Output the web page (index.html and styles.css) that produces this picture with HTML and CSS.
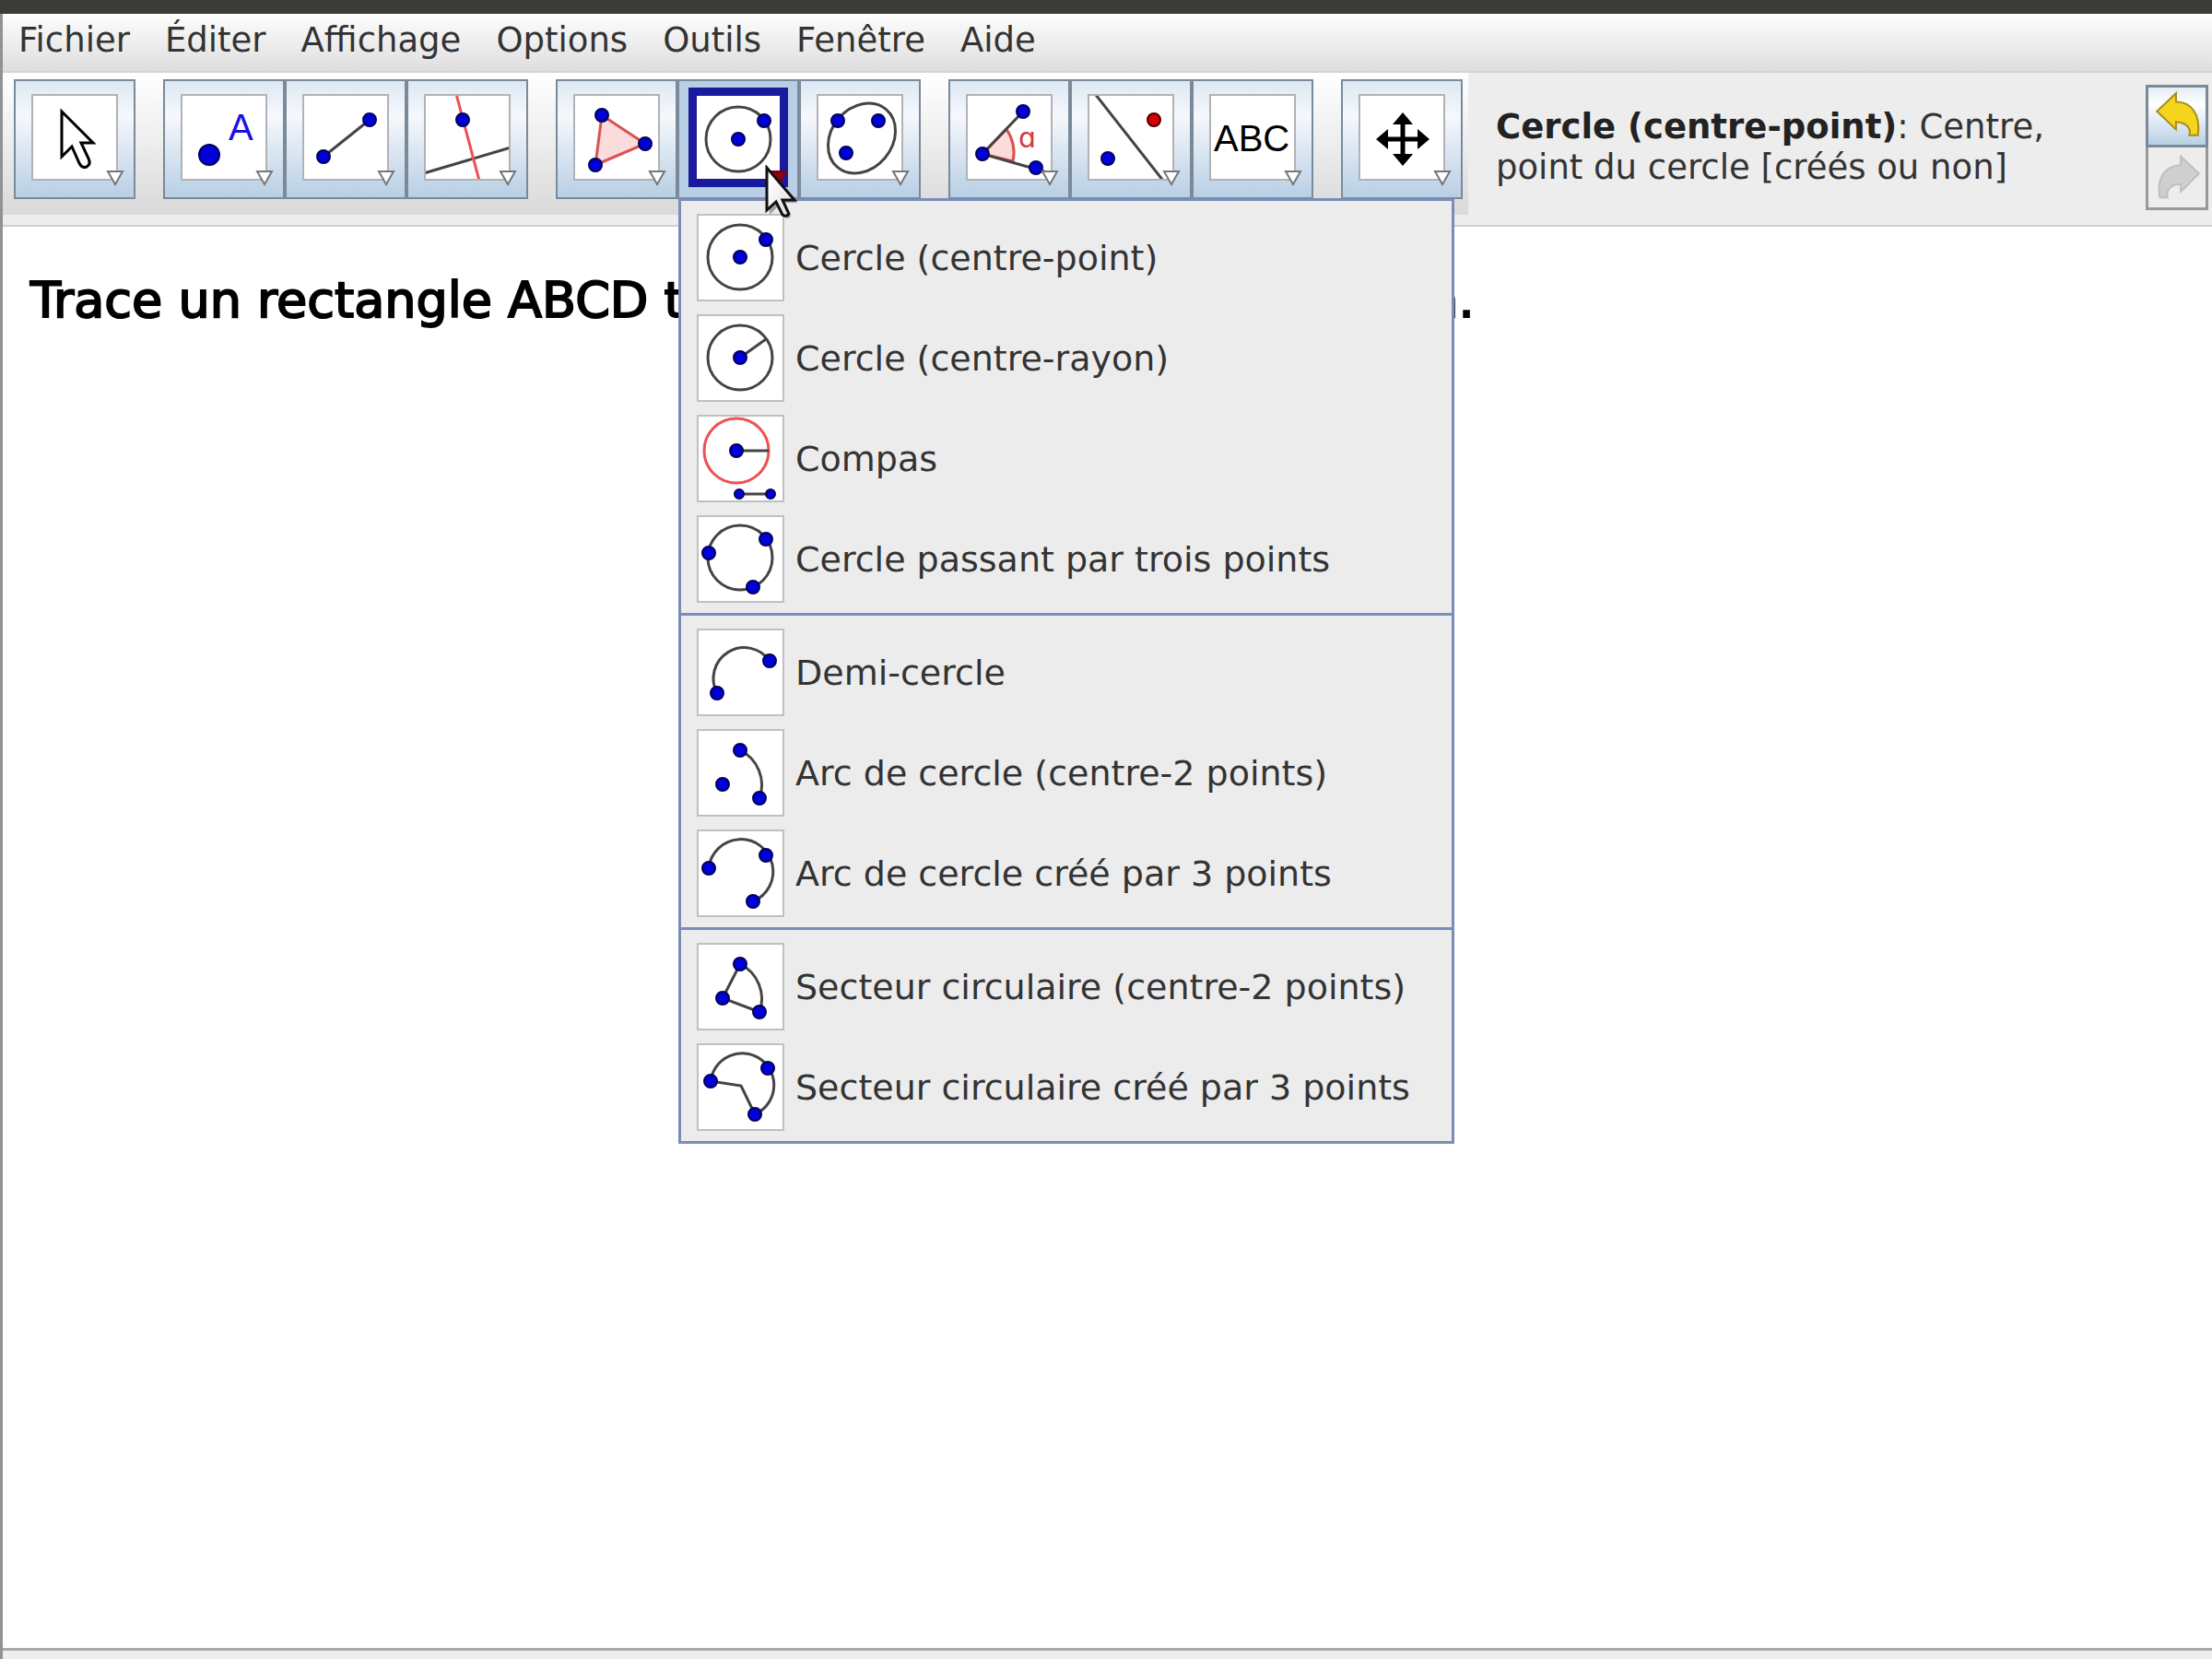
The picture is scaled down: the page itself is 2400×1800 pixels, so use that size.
FILE: index.html
```html
<!DOCTYPE html>
<html lang="fr">
<head>
<meta charset="UTF-8">
<meta name="viewport" content="width=device-width, initial-scale=1.0">
<title>GeoGebra</title>
<link rel="stylesheet" href="styles.css">
</head>
<body>

<div class="titlebar"></div>

<div class="window">
    <nav class="menubar">
        <a href="#">Fichier</a>
        <a href="#">Éditer</a>
        <a href="#">Affichage</a>
        <a href="#">Options</a>
        <a href="#">Outils</a>
        <a href="#">Fenêtre</a>
        <a href="#">Aide</a>
    </nav>

    <header class="toolbar">
        <div class="tools">
            <div class="group">
                <button class="tool" aria-label="Déplacer">
                    <svg class="icon" viewBox="2 2 90 90"><path d="M33 19V68L44 57L52 75Q55 81 60 79Q65 76 62 70L54 53H67Z" fill="#fff" stroke="#000" stroke-width="3"/></svg>
                    <svg class="arrow" viewBox="0 0 20 18"><path d="M2 2H18L10 16Z"/></svg>
                </button>
            </div>

            <div class="group">
                <button class="tool" aria-label="Point">
                    <svg class="icon" viewBox="2 2 90 90"><circle class="dot" cx="31" cy="66" r="11"/><text x="52" y="50" class="letter">A</text></svg>
                    <svg class="arrow" viewBox="0 0 20 18"><path d="M2 2H18L10 16Z"/></svg>
                </button>
                <button class="tool" aria-label="Segment">
                    <svg class="icon" viewBox="2 2 90 90"><path class="line" d="M23 68L73 28"/><circle class="dot" cx="23" cy="68" r="7"/><circle class="dot" cx="73" cy="28" r="7"/></svg>
                    <svg class="arrow" viewBox="0 0 20 18"><path d="M2 2H18L10 16Z"/></svg>
                </button>
                <button class="tool" aria-label="Perpendiculaire">
                    <svg class="icon" viewBox="2 2 90 90"><path class="line" d="M0 86L94 58"/><path class="line red" d="M35 0L60 94"/><circle class="dot" cx="42" cy="28" r="7"/></svg>
                    <svg class="arrow" viewBox="0 0 20 18"><path d="M2 2H18L10 16Z"/></svg>
                </button>
            </div>

            <div class="group">
                <button class="tool" aria-label="Polygone">
                    <svg class="icon" viewBox="2 2 90 90"><path class="area" d="M31 23L78 54L24 77Z"/><circle class="dot" cx="31" cy="23" r="7"/><circle class="dot" cx="78" cy="54" r="7"/><circle class="dot" cx="24" cy="77" r="7"/></svg>
                    <svg class="arrow" viewBox="0 0 20 18"><path d="M2 2H18L10 16Z"/></svg>
                </button>
                <div class="tool-wrap">
                    <button class="tool selected" aria-label="Cercle" aria-expanded="true">
                        <svg class="icon" viewBox="2 2 90 90"><circle class="line" cx="47" cy="49" r="35"/><circle class="dot" cx="47" cy="49" r="7"/><circle class="dot" cx="75" cy="29" r="7"/></svg>
                        <svg class="arrow" viewBox="0 0 20 18"><path d="M2 2H18L10 16Z"/></svg>
                    </button>
                    <div class="dropdown">
                        <button class="item"><svg class="icon" viewBox="2 2 91 91"><circle class="line" cx="47" cy="47" r="35"/><circle class="dot" cx="47" cy="47" r="7"/><circle class="dot" cx="75" cy="28" r="7"/></svg>Cercle (centre-point)</button>
                        <button class="item"><svg class="icon" viewBox="2 2 91 91"><circle class="line" cx="47" cy="47" r="35"/><path class="line" d="M47 47L75 27"/><circle class="dot" cx="47" cy="47" r="7"/></svg>Cercle (centre-rayon)</button>
                        <button class="item"><svg class="icon" viewBox="2 2 91 91"><circle class="line red" cx="43" cy="39" r="35"/><path class="line" d="M43 39H78M46 86H80"/><circle class="dot" cx="43" cy="39" r="7"/><circle class="dot" cx="46" cy="86" r="5"/><circle class="dot" cx="80" cy="86" r="5"/></svg>Compas</button>
                        <button class="item"><svg class="icon" viewBox="2 2 91 91"><circle class="line" cx="47" cy="46" r="35"/><circle class="dot" cx="13" cy="41" r="7"/><circle class="dot" cx="75" cy="26" r="7"/><circle class="dot" cx="61" cy="78" r="7"/></svg>Cercle passant par trois points</button>
                        <hr>
                        <button class="item"><svg class="icon" viewBox="2 2 91 91"><path class="line" d="M22 70A33.5 33.5 0 0 1 79 35"/><circle class="dot" cx="22" cy="70" r="7"/><circle class="dot" cx="79" cy="35" r="7"/></svg>Demi-cercle</button>
                        <button class="item"><svg class="icon" viewBox="2 2 91 91"><path class="line" d="M47 23A42 42 0 0 1 68 75"/><circle class="dot" cx="47" cy="23" r="7"/><circle class="dot" cx="28" cy="60" r="7"/><circle class="dot" cx="68" cy="75" r="7"/></svg>Arc de cercle (centre-2 points)</button>
                        <button class="item"><svg class="icon" viewBox="2 2 91 91"><path class="line" d="M13 42A35 35 0 1 1 61 78"/><circle class="dot" cx="13" cy="42" r="7"/><circle class="dot" cx="75" cy="28" r="7"/><circle class="dot" cx="61" cy="78" r="7"/></svg>Arc de cercle créé par 3 points</button>
                        <hr>
                        <button class="item"><svg class="icon" viewBox="2 2 91 91"><path class="line" d="M47 23A42 42 0 0 1 68 75L28 60Z"/><circle class="dot" cx="47" cy="23" r="7"/><circle class="dot" cx="28" cy="60" r="7"/><circle class="dot" cx="68" cy="75" r="7"/></svg>Secteur circulaire (centre-2 points)</button>
                        <button class="item"><svg class="icon" viewBox="2 2 91 91"><path class="line" d="M15 41A34.5 34.5 0 1 1 63 77L48 46Z"/><circle class="dot" cx="15" cy="41" r="7"/><circle class="dot" cx="77" cy="27" r="7"/><circle class="dot" cx="63" cy="77" r="7"/></svg>Secteur circulaire créé par 3 points</button>
                    </div>
                    <svg class="pointer" viewBox="0 0 40 62"><defs><linearGradient id="pg" x2="1" y2="1"><stop offset="0.2" stop-color="#fff"/><stop offset="1" stop-color="#ddd"/></linearGradient></defs><path d="M6 6V54L16 44L22 56Q25 60 29 56L22 41H36Z" fill="#555" opacity="0.5"/><path d="M3 3V49L13 40L20 54Q24 57 27 53L20 38H33Z" fill="url(#pg)" stroke="#111" stroke-width="3"/></svg>
                </div>
                <button class="tool" aria-label="Ellipse">
                    <svg class="icon" viewBox="2 2 90 90"><ellipse class="line" cx="49" cy="48" rx="41" ry="33" transform="rotate(-50 49 48)"/><circle class="dot" cx="23" cy="29" r="7"/><circle class="dot" cx="67" cy="29" r="7"/><circle class="dot" cx="32" cy="64" r="7"/></svg>
                    <svg class="arrow" viewBox="0 0 20 18"><path d="M2 2H18L10 16Z"/></svg>
                </button>
            </div>

            <div class="group">
                <button class="tool" aria-label="Angle">
                    <svg class="icon" viewBox="2 2 90 90"><path class="area" d="M18 65L44 38Q55 55 51 73Z"/><path class="line" d="M62 19L18 65L92 86"/><circle class="dot" cx="62" cy="19" r="7"/><circle class="dot" cx="18" cy="65" r="7"/><circle class="dot" cx="76" cy="80" r="7"/><text x="57" y="58" class="alpha">ɑ</text></svg>
                    <svg class="arrow" viewBox="0 0 20 18"><path d="M2 2H18L10 16Z"/></svg>
                </button>
                <button class="tool" aria-label="Symétrie axiale">
                    <svg class="icon" viewBox="2 2 90 90"><path class="line" d="M9 1L82 94"/><circle class="dot" cx="22" cy="70" r="7"/><circle class="dot red-dot" cx="72" cy="28" r="7"/></svg>
                    <svg class="arrow" viewBox="0 0 20 18"><path d="M2 2H18L10 16Z"/></svg>
                </button>
                <button class="tool" aria-label="Texte">
                    <svg class="icon" viewBox="2 2 90 90"><text x="5" y="62" class="letter black">ABC</text></svg>
                    <svg class="arrow" viewBox="0 0 20 18"><path d="M2 2H18L10 16Z"/></svg>
                </button>
            </div>

            <div class="group">
                <button class="tool" aria-label="Déplacer la feuille">
                    <svg class="icon" viewBox="2 2 90 90"><path d="M48 26V72M26 49H70" stroke="#000" stroke-width="5"/><path d="M48 20L59 33H37ZM48 78L59 65H37ZM19 49L32 38V60ZM77 49L64 38V60Z"/></svg>
                    <svg class="arrow" viewBox="0 0 20 18"><path d="M2 2H18L10 16Z"/></svg>
                </button>
            </div>
        </div>

        <p class="help"><b>Cercle (centre-point)</b>: Centre,<br>point du cercle [créés ou non]</p>

        <div class="history">
            <button aria-label="Annuler"><svg viewBox="0 0 60 60"><path d="M9 25L29 6V15C45 15 55 28 52 50H43C45 42 40 37 29 36V44Z" fill="#f7d51d" stroke="#a8901c" stroke-width="2"/></svg></button>
            <button aria-label="Rétablir" disabled><svg viewBox="0 0 60 60"><path d="M53 26L34 8V17C18 18 8 30 12 51H20C18 43 24 37 34 37V45Z" fill="#cfcfcf" stroke="#c0c0c0" stroke-width="2"/></svg></button>
        </div>
    </header>

    <main class="sheet">
        <p class="task"><span>Trace un rectangle ABCD t</span><span>m.</span></p>
    </main>

    <footer class="status"></footer>
</div>

</body>
</html>
```
FILE: styles.css
```css
* {
    box-sizing: border-box;
}

body {
    display: flex;
    flex-direction: column;
    min-height: 100vh;
    margin: 0;
    background-color: #fff;
    color: #333;
    font-family: "DejaVu Sans", sans-serif;
    font-size: 37px;
}

button {
    margin: 0;
    padding: 0;
    font: inherit;
    color: inherit;
}

.titlebar {
    height: 15px;
    background-color: #3c3b37;
}

.window {
    display: flex;
    flex-direction: column;
    flex: 1;
    border-left: 3px solid #929292;
}

/* menu bar */
.menubar {
    display: flex;
    gap: 38px;
    height: 64px;
    padding: 0 17px;
    line-height: 58px;
    background-image: linear-gradient(#fdfdfd, #dedede);
    border-bottom: 2px solid #d4d4d4;
}

.menubar a {
    color: #333;
    text-decoration: none;
}

/* toolbar */
.toolbar {
    display: flex;
    align-items: center;
    height: 167px;
    padding-bottom: 4px;
    background-color: #ededee;
    border-bottom: 2px solid #cfcfcf;
}

.tools {
    display: flex;
    align-self: flex-start;
    gap: 30px;
    height: 154px;
    padding: 7px 6px 0 12px;
    background-image: linear-gradient(#fff, #ededed 50%, #dad9d9);
}

.group {
    display: flex;
}

.tool {
    position: relative;
    display: flex;
    align-items: center;
    justify-content: center;
    width: 132px;
    height: 130px;
    padding-bottom: 4px;
    border: 2px solid #7a8a99;
    background-image: linear-gradient(#dde8f3, #f6f8fc 30%, #b8cfe5);
}

.tool .icon {
    width: 94px;
    height: 94px;
    border: 2px solid #b0b2b6;
    background-color: #fff;
}

.tool.selected {
    background: #b8cfe5;
}

.tool.selected .icon {
    width: 108px;
    height: 108px;
    border: 9px solid #1a1a9e;
}

.arrow {
    position: absolute;
    right: 10px;
    bottom: 12px;
    width: 20px;
    height: 18px;
    fill: #fff;
    stroke: #777;
    stroke-width: 2;
}

.selected .arrow {
    fill: #900010;
    stroke: #700010;
}

/* drawings in the icons */
.line {
    fill: none;
    stroke: #444;
    stroke-width: 3;
}

.line.red {
    stroke: #ee5055;
}

.area {
    fill: #fbdcdc;
    stroke: #d9534f;
    stroke-width: 3;
}

.dot {
    fill: #0000d8;
    stroke: #00005a;
    stroke-width: 2;
}

.red-dot {
    fill: #d80000;
    stroke: #500000;
}

.letter {
    font: 40px "Liberation Sans", sans-serif;
    fill: #1c10e0;
}

.letter.black {
    fill: #000;
}

.alpha {
    font: 30px "DejaVu Sans", sans-serif;
    fill: #d03a40;
}

/* list of circle tools */
.tool-wrap {
    position: relative;
}

.dropdown {
    position: absolute;
    z-index: 1;
    top: 129px;
    left: 1px;
    width: 842px;
    padding: 6px 0 5px;
    background-color: #ececed;
    border: 3px solid #7a8cb8;
    font-size: 38px;
}

.item {
    display: flex;
    align-items: center;
    gap: 12px;
    width: 100%;
    height: 109px;
    padding: 2px 0 0 17px;
    border: 0;
    background: none;
    text-align: left;
    white-space: nowrap;
}

.item .icon {
    width: 95px;
    height: 95px;
    border: 2px solid #c0c0c0;
    background-color: #fff;
}

.dropdown hr {
    height: 3px;
    margin: 5px 0 6px;
    border: 0;
    background-color: #7a8cb8;
}

.pointer {
    position: absolute;
    z-index: 2;
    top: 93px;
    left: 94px;
    width: 40px;
    height: 62px;
}

.help {
    flex: 1;
    margin: 0;
    padding-left: 30px;
    line-height: 44px;
}

.help b {
    color: #222;
}

.history {
    display: flex;
    flex-direction: column;
    margin-right: 4px;
}

.history button {
    width: 68px;
    height: 68px;
    border: 3px solid #7a8a99;
    background-image: linear-gradient(#e4edf6, #fff 30%, #b8cfe5);
}

.history button:disabled {
    border-color: #999;
    border-top: 0;
    background: #ededed;
}

.history svg {
    display: block;
    width: 100%;
    height: 100%;
}

/* drawing sheet */
.sheet {
    flex: 1;
    padding: 48px 30px;
}

.task {
    display: flex;
    gap: 788px;
    margin: 0;
    color: #000;
    font-size: 54px;
    -webkit-text-stroke: 2px #000;
}

.status {
    height: 12px;
    background-color: #eee;
    border-top: 3px solid #aaa;
}
```
